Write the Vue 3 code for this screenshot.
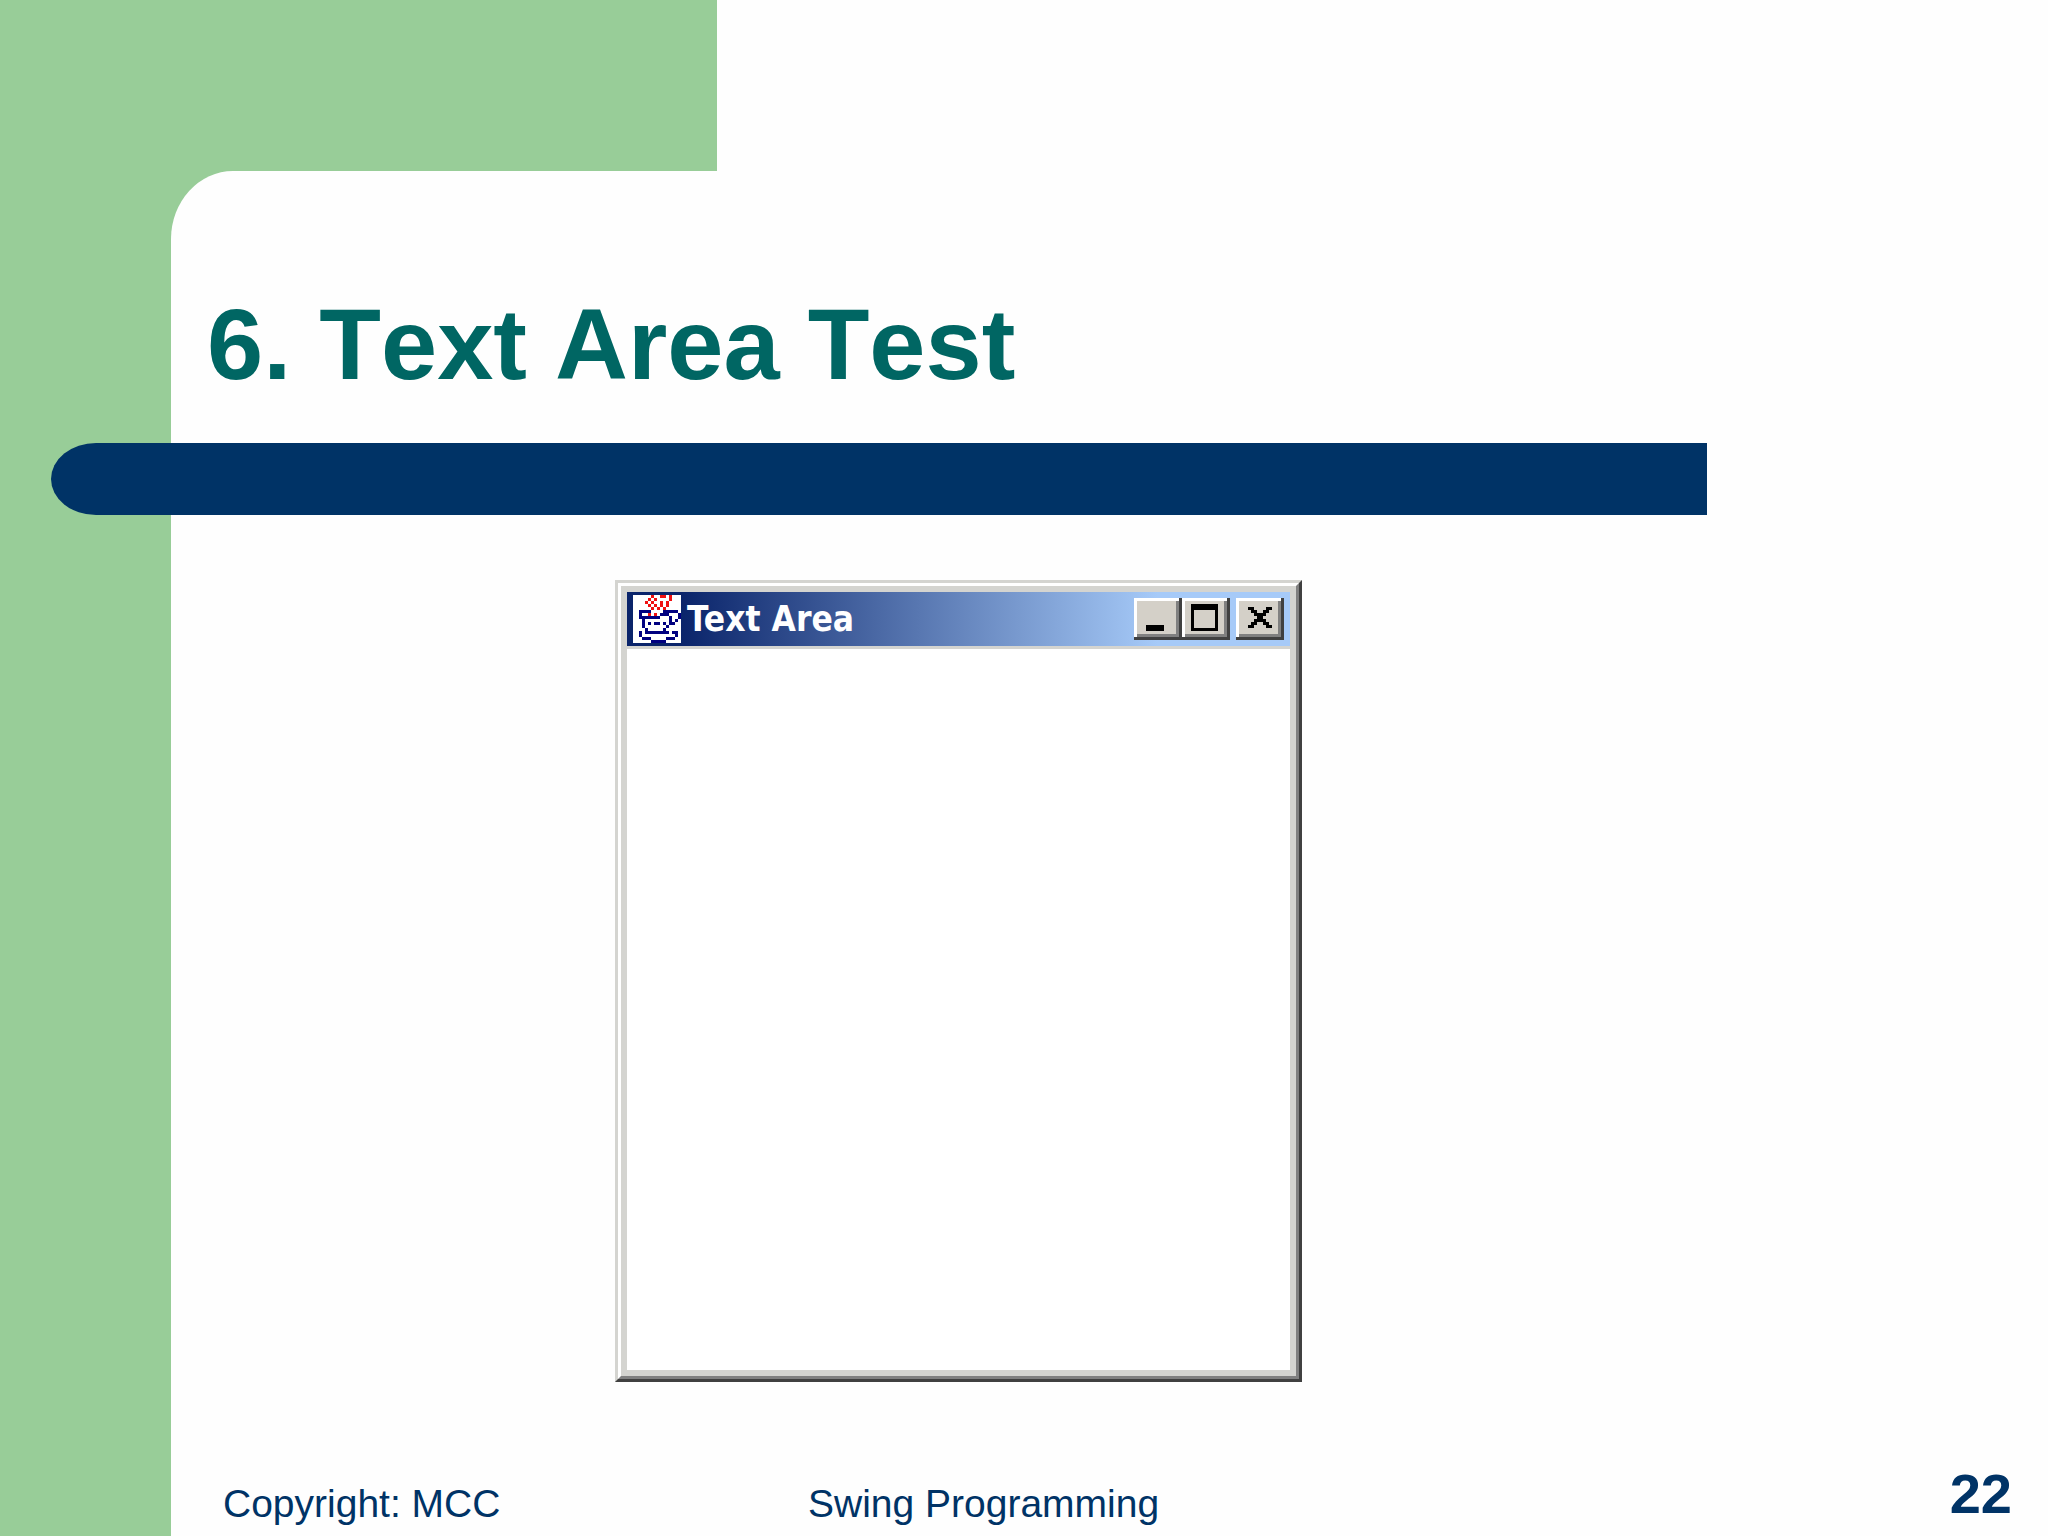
<script setup>
const R = '#f01010'
const B = '#000080'
const rows = [
  '......r..rr.r...',
  '.....r.r....r...',
  '....r.r..r.r....',
  '.....r.r.r.r....',
  '......r.r.r.....',
  '..bbbb....bbbbb.',
  '..b..r.r.bbb...b',
  '..bbbbbbb...b..b',
  '...b........b.b.',
  '...b.b.bb.b.bb..',
  '...b.......b....',
  '....b.....b.....',
  '..b.bbbbbbbb.bb.',
  '..b...........b.',
  '...bbb.....bbb..',
  '......bbbbb.....',
]
const pixels = []
rows.forEach((row, y) => {
  ;[...row].forEach((c, x) => {
    if (c !== '.') pixels.push({ x, y, fill: c === 'r' ? R : B })
  })
})
</script>

<template>
  <main class="slide">
    <div class="band"></div>
    <section class="sheet">
      <h1>6. Text Area Test</h1>
      <div class="rule"></div>
      <div class="window">
        <div class="frame">
          <header class="titlebar">
            <svg class="logo" viewBox="0 0 16 16" shape-rendering="crispEdges" aria-hidden="true">
              <rect width="16" height="16" fill="#fff" />
              <rect v-for="(p, i) in pixels" :key="i" :x="p.x" :y="p.y" width="1" height="1" :fill="p.fill" />
            </svg>
            <span class="caption">Text Area</span>
            <button type="button" aria-label="Minimize">
              <svg viewBox="0 0 16 14" shape-rendering="crispEdges"><path d="M4 9h6v2H4z" /></svg>
            </button>
            <button type="button" aria-label="Maximize">
              <svg viewBox="0 0 16 14" shape-rendering="crispEdges"><path fill-rule="evenodd" d="M3 2h9v9H3zM4 4v6h7V4z" /></svg>
            </button>
            <button type="button" class="close" aria-label="Close">
              <svg viewBox="0 0 16 14" shape-rendering="crispEdges">
                <path d="M4 3h2v1h1v1h2V4h1V3h2v1h-1v1h-1v1H9v1h1v1h1v1h1v1h-2V9H9V8H7v1H6v1H4V9h1V8h1V7h1V6H6V5H5V4H4z" />
              </svg>
            </button>
          </header>
          <textarea aria-label="Text Area"></textarea>
        </div>
      </div>
      <footer>
        <span>Copyright: MCC</span>
        <span>Swing Programming</span>
        <strong>22</strong>
      </footer>
    </section>
  </main>
</template>

<style>
body { margin: 0; background: #fefefe; }
</style>

<style scoped>
.slide {
  box-sizing: border-box;
  min-height: 100vh;
  display: flex;
  flex-direction: column;
  padding-left: 171px;
  background: #98cd98;
  font-family: "Liberation Sans", Arial, sans-serif;
  font-kerning: none;
  color: #003366;
}
.band {
  height: 171px;
  margin-left: 546px;
  background: #fefefe;
}
.sheet {
  flex: 1;
  display: flex;
  flex-direction: column;
  background: #fefefe;
  border-top-left-radius: 62px 68px;
}
h1 {
  margin: 115px 0 0 36px;
  font-size: 101px;
  line-height: 116px;
  color: #006663;
}
.rule {
  height: 72px;
  margin: 41px 341px 0 -120px;
  background: #003366;
  border-radius: 45px 0 0 45px / 36px 0 0 36px;
}
.window {
  box-sizing: border-box;
  width: 687px;
  margin: 65px 0 0 444px;
  border: 3px solid;
  border-color: #d4d4d0 #404040 #404040 #d4d4d0;
}
.frame {
  border: 3px solid;
  border-color: #fff #808080 #808080 #fff;
  background: #d4d4d0;
  padding: 6px;
}
.titlebar {
  box-sizing: border-box;
  height: 54px;
  display: flex;
  align-items: center;
  padding: 0 6px;
  background: linear-gradient(90deg, #0a246a 8%, #a6caf8 80%);
}
.logo { width: 48px; height: 48px; }
.caption {
  flex: 1;
  margin-left: 6px;
  font: bold 35px/48px "DejaVu Sans Condensed", "DejaVu Sans", sans-serif;
  color: #fff;
}
button {
  box-sizing: border-box;
  width: 48px;
  height: 42px;
  padding: 0;
  border: 0;
  background: #d4d0c8;
  box-shadow: inset -3px -3px #404040, inset 3px 3px #fff, inset -6px -6px #808080;
}
button svg { display: block; width: 48px; height: 42px; }
.close { margin-left: 6px; }
textarea {
  box-sizing: border-box;
  display: block;
  width: 100%;
  height: 721px;
  margin-top: 3px;
  padding: 6px;
  border: 0;
  resize: none;
  background: #fff;
}
footer {
  display: grid;
  grid-template-columns: 585px 1fr auto;
  align-items: end;
  margin: auto 36px 10px 52px;
  font-size: 39px;
  line-height: 44px;
}
strong {
  font-size: 56px;
  line-height: 64px;
}
</style>
